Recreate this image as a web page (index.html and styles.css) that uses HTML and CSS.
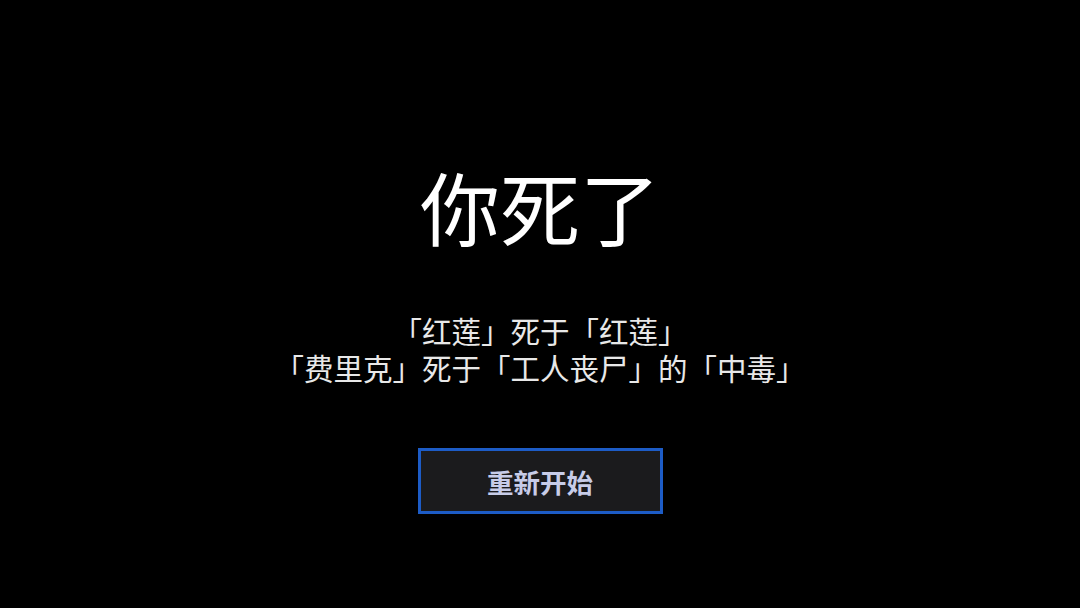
FILE: index.html
```html
<!DOCTYPE html>
<html lang="zh-CN">
<head>
<meta charset="utf-8">
<title>你死了</title>
<link rel="stylesheet" href="styles.css">
</head>
<body>
<main class="death-screen">
  <h1 class="death-title">你死了</h1>
  <div class="death-log">
    <p class="death-line">「红莲」死于「红莲」</p>
    <p class="death-line">「费里克」死于「工人丧尸」的「中毒」</p>
  </div>
  <button class="restart-btn" type="button">重新开始</button>
</main>
</body>
</html>
```

FILE: styles.css
```css
html, body {
  margin: 0;
  padding: 0;
  background: #000;
}

body {
  width: 1080px;
  height: 608px;
  overflow: hidden;
  font-family: "Noto Sans CJK SC", "Noto Sans", sans-serif;
}

.death-screen {
  height: 608px;
  display: flex;
  flex-direction: column;
  align-items: center;
  padding-top: 165px;
  box-sizing: border-box;
}

.death-title {
  margin: 0;
  font-size: 80px;
  line-height: 80px;
  font-weight: 400;
  color: #ffffff;
}

.death-log {
  margin-top: 67px;
  display: flex;
  flex-direction: column;
  align-items: center;
}

.death-line {
  margin: 0;
  font-size: 29.5px;
  line-height: 37px;
  color: #e8e8e8;
  white-space: nowrap;
  text-spacing-trim: space-all;
}

.restart-btn {
  margin-top: 62px;
  width: 245px;
  height: 66px;
  box-sizing: border-box;
  border: 3px solid #1d5cc6;
  background: #1b1b1d;
  color: #c7cce8;
  font-family: "Noto Sans CJK SC", "Noto Sans", sans-serif;
  font-size: 26.5px;
  font-weight: 700;
  padding: 0;
  border-radius: 0;
}
```
